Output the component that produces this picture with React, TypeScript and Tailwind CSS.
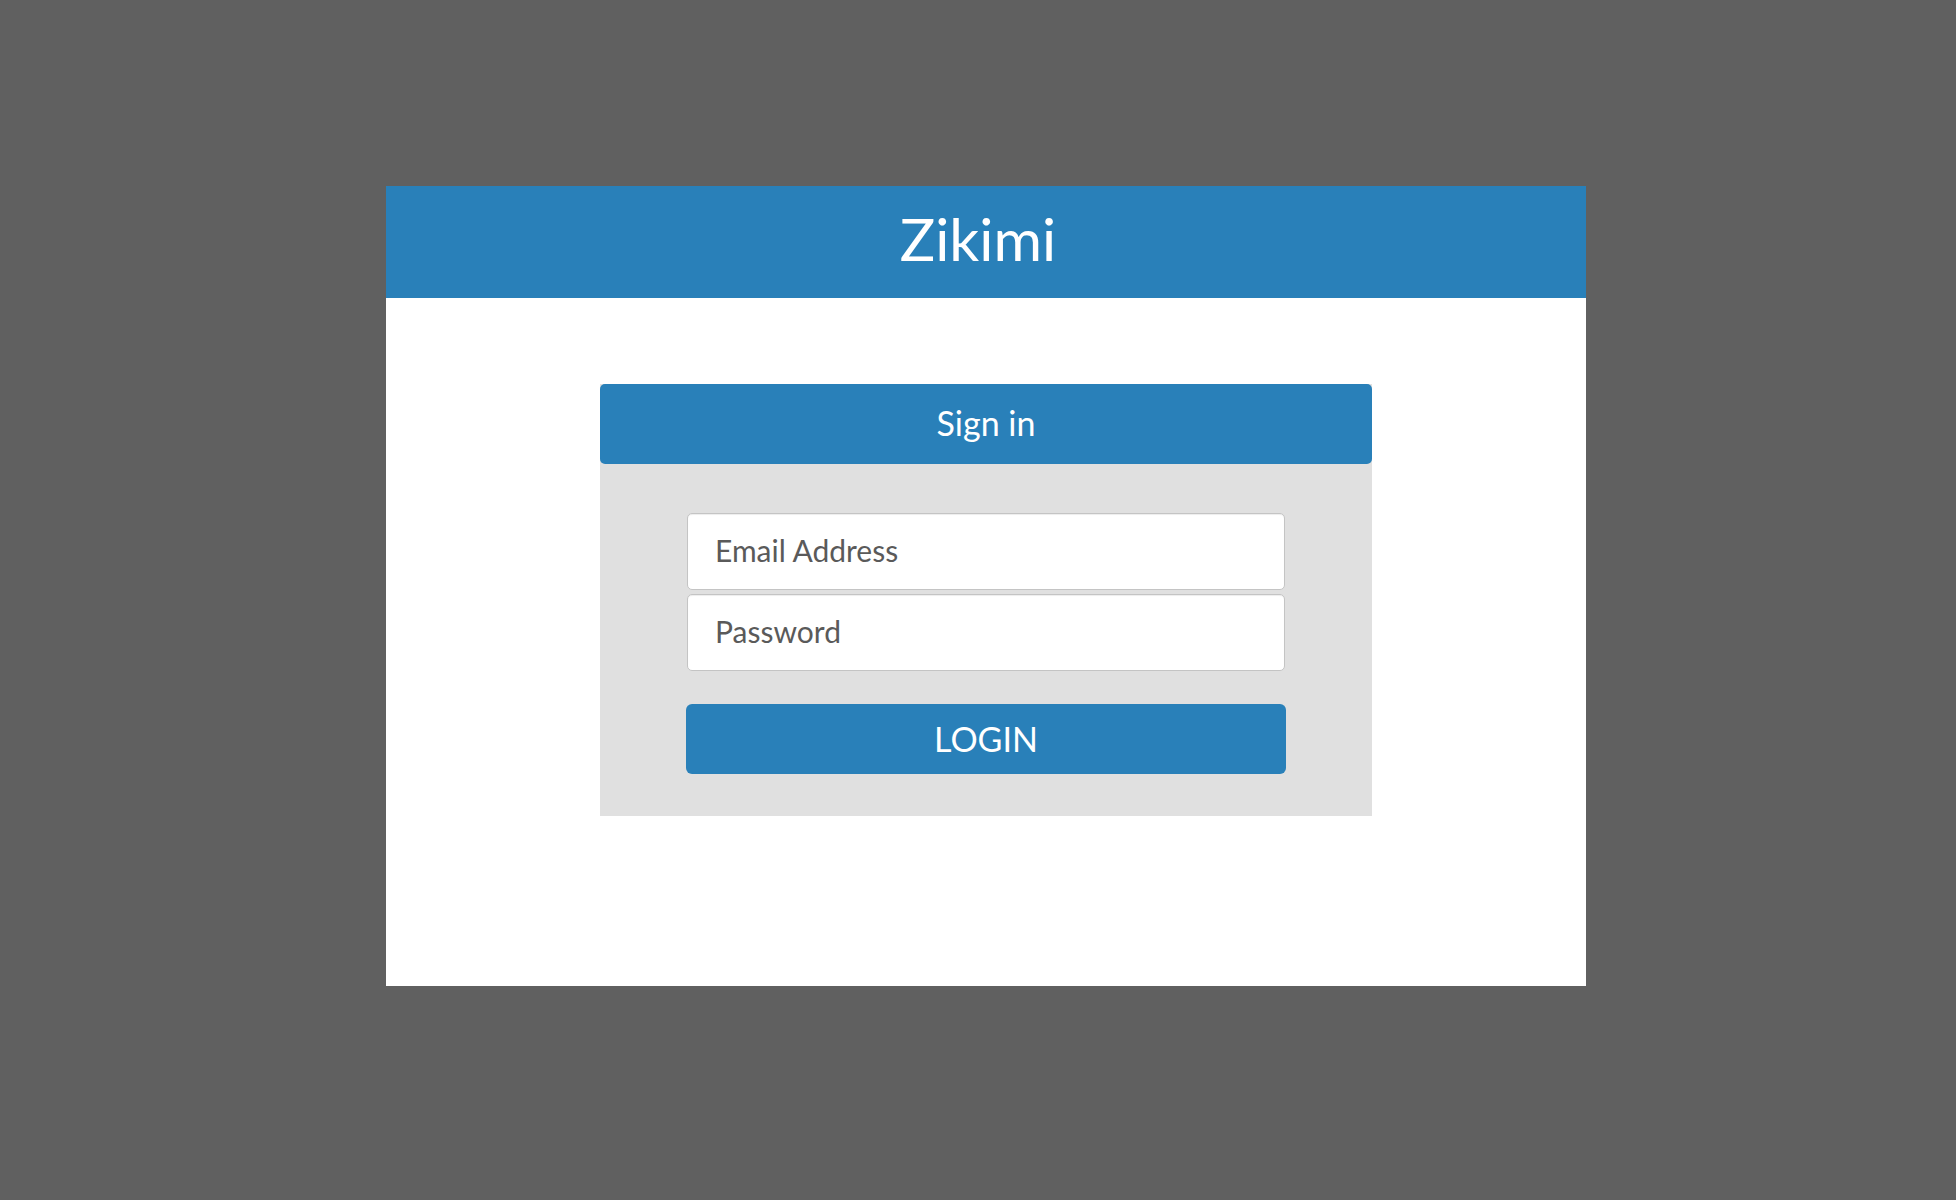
import React from 'react';

export default function App() {
  return (
    <div className="min-h-[1200px] w-full bg-[#606060] pt-[186px] pl-[386px] font-['Lato','Open_Sans',sans-serif]">
      {/* Card */}
      <div className="w-[1200px] h-[800px] bg-white flex flex-col">
        {/* Title bar */}
        <header className="h-[112px] bg-[#2980b9] flex items-center justify-center pr-[16px] pb-[8px]">
          <h1 className="text-[59px] leading-none text-white">Zikimi</h1>
        </header>

        {/* Login panel */}
        <div className="ml-[214px] mt-[86px] w-[772px] bg-[#e0e0e0] flex flex-col">
          <div className="h-[80px] rounded-[5px] bg-[#2980b9] flex items-center justify-center">
            <span className="text-[34px] leading-none text-white pb-[2px]">Sign in</span>
          </div>

          <form className="flex flex-col items-center pt-[49px] pb-[42px]" onSubmit={(e) => e.preventDefault()}>
            <input
              type="email"
              placeholder="Email Address"
              className="w-[598px] h-[77px] rounded-[5px] border border-[#c4c4c4] bg-white px-[27px] pb-[3px] text-[30px] text-[#5a5a5a] placeholder:text-[#5a5a5a] outline-none shadow-[inset_0_1px_1px_rgba(0,0,0,0.075)]"
            />
            <input
              type="password"
              placeholder="Password"
              className="mt-[4px] w-[598px] h-[77px] rounded-[5px] border border-[#c4c4c4] bg-white px-[27px] pb-[3px] text-[30px] text-[#5a5a5a] placeholder:text-[#5a5a5a] outline-none shadow-[inset_0_1px_1px_rgba(0,0,0,0.075)]"
            />
            <button
              type="submit"
              className="mt-[33px] w-[600px] h-[70px] rounded-[6px] bg-[#2980b9] text-white text-[34px] leading-none"
            >
              LOGIN
            </button>
          </form>
        </div>
      </div>
    </div>
  );
}
